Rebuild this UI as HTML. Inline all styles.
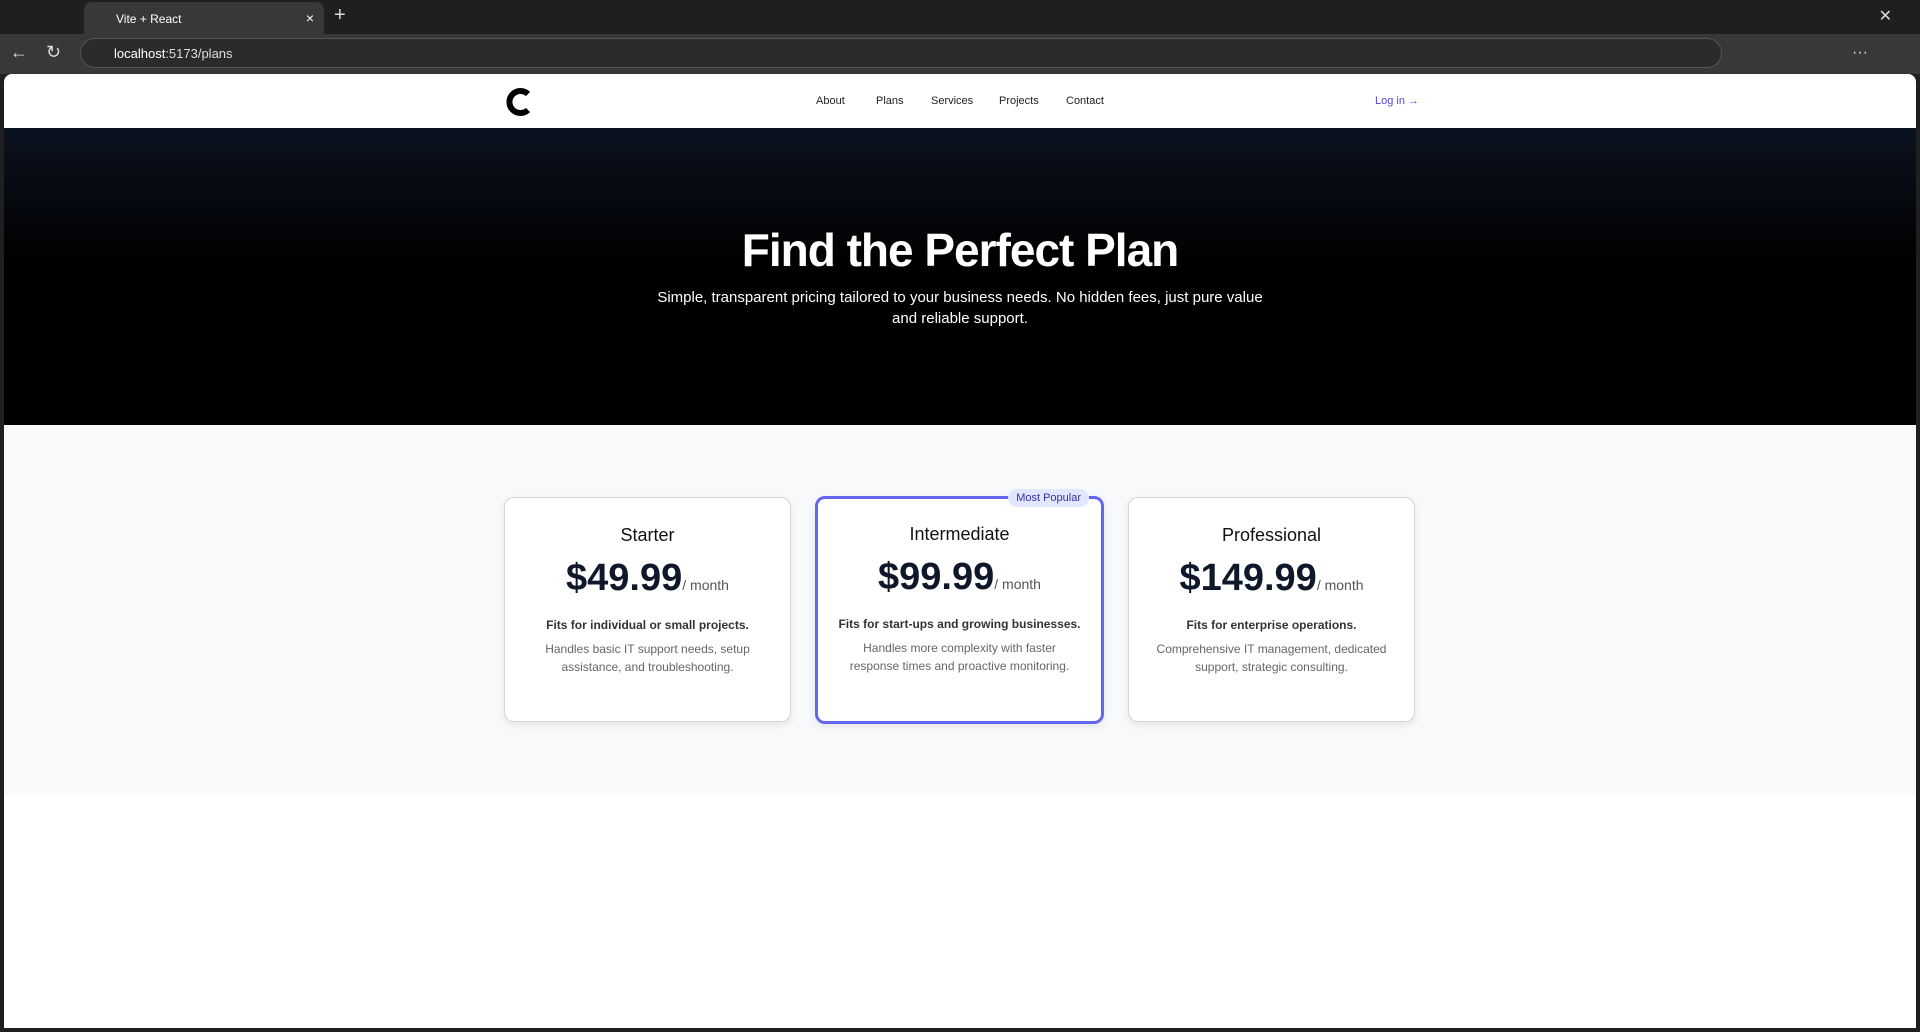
<!DOCTYPE html>
<html><head><meta charset="utf-8"><style>
*{box-sizing:border-box;margin:0;padding:0}
body{width:1920px;height:1032px;background:#1f1f1f;font-family:"Liberation Sans",sans-serif;position:relative;overflow:hidden}
.tabbar{position:absolute;left:0;top:0;width:1920px;height:34px;background:#1f1f1f}
.tab{position:absolute;left:84px;top:2px;width:240px;height:32px;background:#383838;border-radius:8px 8px 0 0;color:#fff;font-size:12px;padding:10px 0 0 32px}
.toolbar{position:absolute;left:0;top:34px;width:1920px;height:40px;background:#383838}
.addr{position:absolute;left:80px;top:4px;width:1642px;height:30px;background:#2b2b2b;border:1px solid #555;border-radius:15px;color:#ddd;font-size:13px;padding:7px 0 0 33px}
.page{position:absolute;left:4px;top:74px;width:1912px;height:954px;background:#fff;border-radius:8px 8px 0 0;overflow:hidden}
.hdr{height:54px;position:relative}
.nav a{position:absolute;top:21px;font-size:11px;color:#222;text-decoration:none}
.hero{position:absolute;top:54px;left:0;width:100%;height:297px;background:linear-gradient(#0b1220,#000 45%);text-align:center;color:#fff}
.hero h1{font-size:46px;font-weight:bold;letter-spacing:-1px;margin-top:95px}
.hero p{font-size:15px;line-height:21px;width:630px;margin:10px auto 0}
.gray{position:absolute;top:351px;left:0;width:100%;height:370px;background:#f8f9fb}
.card{position:absolute;top:72px;width:287px;height:225px;background:#fff;border:1px solid #d4d7dd;border-radius:10px;box-shadow:0 3px 8px rgba(0,0,0,.08);text-align:center}
.card.pop{border:3px solid #6366f1;width:289px;top:71px;height:228px}
.card.pop h3{margin-top:25px}
.card h3{font-size:18px;font-weight:normal;color:#111;margin-top:27px}
.price{margin-top:11px;color:#0f172a}
.price b{font-size:38px}
.price span{font-size:14px;color:#555}
.fits{font-size:12px;font-weight:bold;color:#333;margin-top:18px}
.desc{font-size:12px;line-height:18px;color:#666;margin:8px auto 0;width:230px}
.badge{position:absolute;right:12px;top:-10px;background:#e0e7ff;color:#3730a3;font-size:11px;padding:3px 8px;border-radius:9px}
</style></head><body>
<div class="tabbar"><div class="tab">Vite + React<span style="position:absolute;right:10px;top:8px;font-size:14px">×</span></div><span style="position:absolute;left:334px;top:4px;color:#ddd;font-size:20px">+</span>
<span style="position:absolute;right:28px;top:6px;color:#ddd;font-size:16px">✕</span></div>
<div class="toolbar"><span style="position:absolute;left:10px;top:8px;color:#ddd;font-size:18px">←</span><span style="position:absolute;left:46px;top:8px;color:#ddd;font-size:18px">↻</span>
<div class="addr"><span style="color:#fff">localhost</span>:5173/plans</div><span style="position:absolute;left:1852px;top:10px;color:#ddd">···</span></div>
<div class="page">
<div class="hdr">
<svg style="position:absolute;left:500px;top:13px" width="30" height="30" viewBox="0 0 30 30"><path d="M24 7 A11 11 0 1 0 24 23" fill="none" stroke="#000" stroke-width="6"/></svg>
<div class="nav"><a style="left:812px">About</a><a style="left:872px">Plans</a><a style="left:927px">Services</a><a style="left:995px">Projects</a><a style="left:1062px">Contact</a><a style="left:1371px;color:#4f46e5">Log in →</a></div>
</div>
<div class="hero"><h1>Find the Perfect Plan</h1><p>Simple, transparent pricing tailored to your business needs. No hidden fees, just pure value and reliable support.</p></div>
<div class="gray">
<div class="card" style="left:500px"><h3>Starter</h3><div class="price"><b>$49.99</b><span>/ month</span></div><div class="fits">Fits for individual or small projects.</div><div class="desc">Handles basic IT support needs, setup assistance, and troubleshooting.</div></div>
<div class="card pop" style="left:811px"><div class="badge">Most Popular</div><h3>Intermediate</h3><div class="price"><b>$99.99</b><span>/ month</span></div><div class="fits">Fits for start-ups and growing businesses.</div><div class="desc">Handles more complexity with faster response times and proactive monitoring.</div></div>
<div class="card" style="left:1124px"><h3>Professional</h3><div class="price"><b>$149.99</b><span>/ month</span></div><div class="fits">Fits for enterprise operations.</div><div class="desc">Comprehensive IT management, dedicated support, strategic consulting.</div></div>
</div>
</div>
</body></html>
